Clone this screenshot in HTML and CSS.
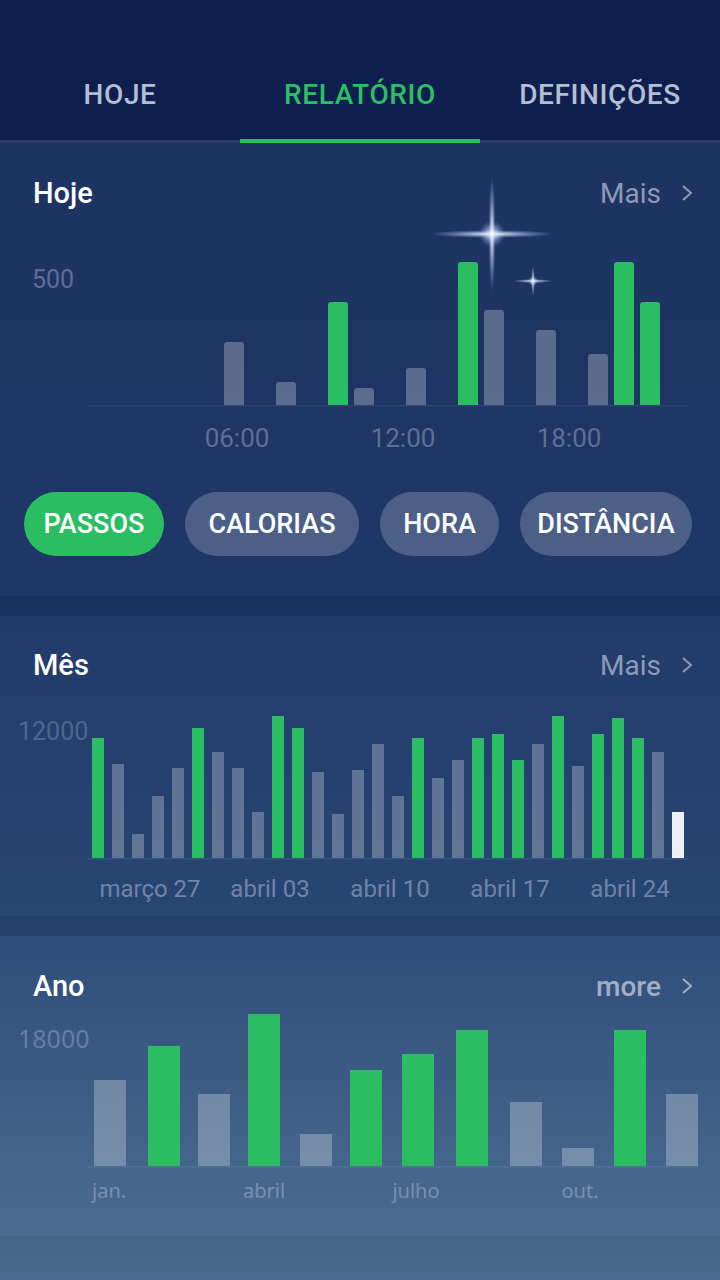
FILE: index.html
```html
<!DOCTYPE html>
<html lang="pt">

<head>
    <meta charset="UTF-8">
    <meta name="viewport" content="width=device-width, initial-scale=1.0">
    <title>Relatório</title>
    <link rel="stylesheet" href="styles.css">
</head>

<body>

    <div id="tabs">
        <div class="tab">HOJE</div>
        <div class="tab active">RELATÓRIO</div>
        <div class="tab">DEFINIÇÕES</div>
    </div>

    <!-- Hoje -->
    <div class="panel panel-today">
        <div class="panel-head">
            <span class="panel-title">Hoje</span>
            <span class="panel-more">Mais
                <svg class="chevron" width="12" height="20" viewBox="0 0 12 20"><polyline points="2,3 10,10 2,17" /></svg>
            </span>
        </div>
        <svg class="chart chart-today" width="720" height="230" viewBox="0 0 720 230">
            <defs>
                <clipPath id="today-clip"><rect x="0" y="-60" width="720" height="240" /></clipPath>
                <radialGradient id="glow">
                    <stop offset="0" stop-color="#ffffff" stop-opacity="1" />
                    <stop offset="0.35" stop-color="#d6e4ff" stop-opacity="0.65" />
                    <stop offset="1" stop-color="#9fbcff" stop-opacity="0" />
                </radialGradient>
            </defs>
            <text class="axis-label" x="32" y="63">500</text>
            <g clip-path="url(#today-clip)">
                <rect class="bar-gray" x="224" y="117" width="20" height="68" rx="3" />
                <rect class="bar-gray" x="276" y="157" width="20" height="28" rx="3" />
                <rect class="bar-green" x="328" y="77" width="20" height="108" rx="3" />
                <rect class="bar-gray" x="354" y="163" width="20" height="22" rx="3" />
                <rect class="bar-gray" x="406" y="143" width="20" height="42" rx="3" />
                <rect class="bar-green" x="458" y="37" width="20" height="148" rx="3" />
                <rect class="bar-gray" x="484" y="85" width="20" height="100" rx="3" />
                <rect class="bar-gray" x="536" y="105" width="20" height="80" rx="3" />
                <rect class="bar-gray" x="588" y="129" width="20" height="56" rx="3" />
                <rect class="bar-green" x="614" y="37" width="20" height="148" rx="3" />
                <rect class="bar-green" x="640" y="77" width="20" height="108" rx="3" />
            </g>
            <rect class="baseline" x="88" y="180" width="600" height="1.5" />
            <text class="axis-label" x="237" y="222" text-anchor="middle">06:00</text>
            <text class="axis-label" x="403" y="222" text-anchor="middle">12:00</text>
            <text class="axis-label" x="569" y="222" text-anchor="middle">18:00</text>

            <!-- sparkles -->
            <g class="sparkle">
                <ellipse cx="492" cy="9" rx="62" ry="4" fill="url(#glow)" />
                <ellipse cx="492" cy="9" rx="3.5" ry="58" fill="url(#glow)" />
                <circle cx="492" cy="9" r="13" fill="url(#glow)" />
                <ellipse cx="533" cy="56" rx="20" ry="2" fill="url(#glow)" />
                <ellipse cx="533" cy="56" rx="2" ry="15" fill="url(#glow)" />
                <circle cx="533" cy="56" r="5" fill="url(#glow)" />
            </g>
        </svg>
        <div class="pills">
            <div class="pill pill-steps active">PASSOS</div>
            <div class="pill pill-calories">CALORIAS</div>
            <div class="pill pill-hour">HORA</div>
            <div class="pill pill-distance">DISTÂNCIA</div>
        </div>
    </div>

    <!-- Mês -->
    <div class="panel panel-month">
        <div class="panel-head">
            <span class="panel-title">Mês</span>
            <span class="panel-more">Mais
                <svg class="chevron" width="12" height="20" viewBox="0 0 12 20"><polyline points="2,3 10,10 2,17" /></svg>
            </span>
        </div>
        <svg class="chart chart-month" width="720" height="208" viewBox="0 0 720 208">
            <text class="axis-label" x="18" y="43">12000</text>
            <rect class="bar-green" x="92" y="41" width="12" height="120" />
            <rect class="bar-gray" x="112" y="67" width="12" height="94" />
            <rect class="bar-gray" x="132" y="137" width="12" height="24" />
            <rect class="bar-gray" x="152" y="99" width="12" height="62" />
            <rect class="bar-gray" x="172" y="71" width="12" height="90" />
            <rect class="bar-green" x="192" y="31" width="12" height="130" />
            <rect class="bar-gray" x="212" y="55" width="12" height="106" />
            <rect class="bar-gray" x="232" y="71" width="12" height="90" />
            <rect class="bar-gray" x="252" y="115" width="12" height="46" />
            <rect class="bar-green" x="272" y="19" width="12" height="142" />
            <rect class="bar-green" x="292" y="31" width="12" height="130" />
            <rect class="bar-gray" x="312" y="75" width="12" height="86" />
            <rect class="bar-gray" x="332" y="117" width="12" height="44" />
            <rect class="bar-gray" x="352" y="73" width="12" height="88" />
            <rect class="bar-gray" x="372" y="47" width="12" height="114" />
            <rect class="bar-gray" x="392" y="99" width="12" height="62" />
            <rect class="bar-green" x="412" y="41" width="12" height="120" />
            <rect class="bar-gray" x="432" y="81" width="12" height="80" />
            <rect class="bar-gray" x="452" y="63" width="12" height="98" />
            <rect class="bar-green" x="472" y="41" width="12" height="120" />
            <rect class="bar-green" x="492" y="37" width="12" height="124" />
            <rect class="bar-green" x="512" y="63" width="12" height="98" />
            <rect class="bar-gray" x="532" y="47" width="12" height="114" />
            <rect class="bar-green" x="552" y="19" width="12" height="142" />
            <rect class="bar-gray" x="572" y="69" width="12" height="92" />
            <rect class="bar-green" x="592" y="37" width="12" height="124" />
            <rect class="bar-green" x="612" y="21" width="12" height="140" />
            <rect class="bar-green" x="632" y="41" width="12" height="120" />
            <rect class="bar-gray" x="652" y="55" width="12" height="106" />
            <rect class="bar-white" x="672" y="115" width="12" height="46" />
            <rect class="baseline" x="88" y="161" width="600" height="1.5" />
            <text class="axis-label" x="150" y="200" text-anchor="middle">março 27</text>
            <text class="axis-label" x="270" y="200" text-anchor="middle">abril 03</text>
            <text class="axis-label" x="390" y="200" text-anchor="middle">abril 10</text>
            <text class="axis-label" x="510" y="200" text-anchor="middle">abril 17</text>
            <text class="axis-label" x="630" y="200" text-anchor="middle">abril 24</text>
        </svg>
    </div>

    <!-- Ano -->
    <div class="panel panel-year">
        <div class="panel-head">
            <span class="panel-title">Ano</span>
            <span class="panel-more bold">more
                <svg class="chevron" width="12" height="20" viewBox="0 0 12 20"><polyline points="2,3 10,10 2,17" /></svg>
            </span>
        </div>
        <svg class="chart chart-year" width="720" height="210" viewBox="0 0 720 210">
            <text class="axis-label year-label" x="18" y="44">18000</text>
            <rect class="bar-gray" x="94" y="76" width="32" height="86" />
            <rect class="bar-green" x="148" y="42" width="32" height="120" />
            <rect class="bar-gray" x="198" y="90" width="32" height="72" />
            <rect class="bar-green" x="248" y="10" width="32" height="152" />
            <rect class="bar-gray" x="300" y="130" width="32" height="32" />
            <rect class="bar-green" x="350" y="66" width="32" height="96" />
            <rect class="bar-green" x="402" y="50" width="32" height="112" />
            <rect class="bar-green" x="456" y="26" width="32" height="136" />
            <rect class="bar-gray" x="510" y="98" width="32" height="64" />
            <rect class="bar-gray" x="562" y="144" width="32" height="18" />
            <rect class="bar-green" x="614" y="26" width="32" height="136" />
            <rect class="bar-gray" x="666" y="90" width="32" height="72" />
            <rect class="baseline" x="88" y="162" width="610" height="1.5" />
            <text class="axis-label year-label" x="92" y="194">jan.</text>
            <text class="axis-label year-label" x="264" y="194" text-anchor="middle">abril</text>
            <text class="axis-label year-label" x="416" y="194" text-anchor="middle">julho</text>
            <text class="axis-label year-label" x="580" y="194" text-anchor="middle">out.</text>
        </svg>
    </div>

</body>

</html>
```

FILE: styles.css
```css
body {
    margin: 0;
    padding: 0;
    width: 720px;
    min-height: 1280px;
    font-family: 'Roboto', 'Liberation Sans', sans-serif;
    background: linear-gradient(to bottom,
            #0e1f4f 0, #0e1f4f 143px,
            #182f5e 143px, #1a3160 600px,
            #23406c 930px, #456789 1240px, #476a8e 1280px);
}

#tabs {
    display: flex;
    background-color: #0e1f4f;
    border-bottom: 3px solid #2a3c66;
}

.tab {
    position: relative;
    flex: 1;
    height: 140px;
    box-sizing: border-box;
    padding-top: 48px;
    display: flex;
    align-items: center;
    justify-content: center;
    font-size: 28px;
    font-weight: 500;
    letter-spacing: 0.6px;
    color: #b5bdd1;
}

.tab.active {
    color: #2dbd63;
}

.tab.active::after {
    content: '';
    position: absolute;
    left: 0;
    right: 0;
    bottom: -3px;
    height: 4px;
    background-color: #2dbd63;
}

.panel {
    padding-top: 34px;
    margin-bottom: 20px;
}

.panel-today {
    background: linear-gradient(to bottom, #1d3361, #1f3767);
    padding-bottom: 40px;
}

.panel-month {
    background: linear-gradient(to bottom, #213b6b, #284672);
    padding-top: 33px;
    padding-bottom: 11px;
}

.panel-year {
    background: linear-gradient(to bottom, #2e4d7a, #4b6c91);
    padding-bottom: 22px;
    margin-bottom: 0;
}

.panel-head {
    display: flex;
    justify-content: space-between;
    align-items: center;
    height: 32px;
    padding: 0 27px 0 33px;
}

.panel-title {
    font-size: 29px;
    font-weight: 500;
    color: #ffffff;
}

.panel-more {
    display: flex;
    align-items: center;
    font-size: 28px;
    color: #8e9ab6;
}

.panel-more.bold {
    font-weight: 500;
    color: #a3aec4;
}

.chevron {
    margin-left: 20px;
    fill: none;
    stroke: currentColor;
    stroke-width: 2;
}

.chart {
    display: block;
    margin-top: 16px;
    overflow: visible;
}

.chart-year {
    margin-top: 2px;
}

.bar-green {
    fill: #2bbd62;
}

.bar-gray {
    fill: rgba(255, 255, 255, 0.27);
}

.bar-white {
    fill: #eef0f4;
}

.baseline {
    fill: rgba(255, 255, 255, 0.08);
}

.axis-label {
    font-family: 'Roboto', 'Liberation Sans', sans-serif;
    font-size: 26px;
    fill: #5d6f97;
}

.chart-today .axis-label:first-of-type {
    font-size: 25px;
}

.chart-month .axis-label {
    fill: #7184a8;
    font-size: 24px;
}

.chart-month .axis-label:first-child {
    fill: #4f6590;
    font-size: 25px;
}

.year-label {
    font-family: 'Noto Sans', 'DejaVu Sans', sans-serif;
    font-size: 20px;
    fill: #7a8fb0;
}

.chart-year .year-label:first-child {
    font-size: 25px;
    fill: #667fa5;
}

.pills {
    display: flex;
    gap: 21px;
    margin-top: 37px;
    padding: 0 24px;
}

.pill {
    height: 64px;
    border-radius: 32px;
    display: flex;
    align-items: center;
    justify-content: center;
    background-color: #4c5f87;
    color: #ffffff;
    font-size: 27px;
    font-weight: 500;
}

.pill-steps {
    width: 140px;
}

.pill-calories {
    width: 174px;
}

.pill-hour {
    width: 119px;
}

.pill-distance {
    width: 172px;
}

.pill.active {
    background-color: #2bbd62;
}
```
